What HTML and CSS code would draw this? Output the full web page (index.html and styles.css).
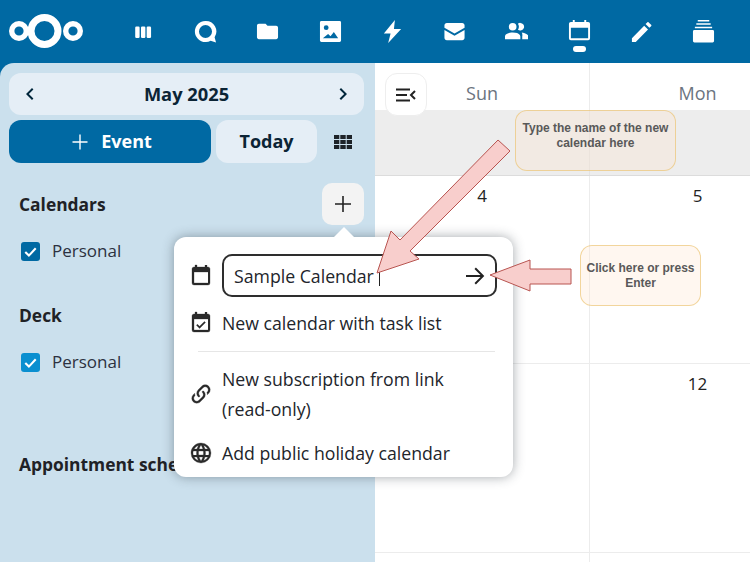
FILE: index.html
```html
<!DOCTYPE html>
<html lang="en">
<head>
<meta charset="utf-8">
<title>Calendar</title>
<link rel="stylesheet" href="styles.css">
</head>
<body>
<header class="topbar">
  <svg class="logo" viewBox="0 0 76 36"><g fill="none" stroke="#fff"><circle cx="11" cy="18" r="7.3" stroke-width="5.4"/><circle cx="36.500" cy="18" r="13.500" stroke-width="7"/><circle cx="65" cy="18" r="7.3" stroke-width="5.4"/></g></svg>
  <nav class="apps">
    <span class="app"><svg viewBox="0 0 24 24"><rect x="3.500" y="6" width="4.800" height="12.500" rx="1.300"/><rect x="9.800" y="6" width="4.800" height="12.500" rx="1.300"/><rect x="16" y="6" width="4.800" height="12.500" rx="1.300"/></svg></span>
    <span class="app"><svg viewBox="0 0 24 24"><path fill-rule="evenodd" d="M12 1a11 11 0 1 0 5.300 20.600L23 23.500 21.500 18A11 11 0 0 0 12 1Zm0 4.200a6.800 6.800 0 1 1 0 13.600 6.800 6.800 0 0 1 0-13.600Z"/></svg></span>
    <span class="app"><svg viewBox="0 0 24 24"><path d="M10 4H3C1.900 4 1 4.900 1 6V18C1 19.100 1.900 20 3 20H21C22.100 20 23 19.100 23 18V8C23 6.900 22.100 6 21 6H12L10 4Z"/></svg></span>
    <span class="app"><svg viewBox="0 0 24 24"><path fill-rule="evenodd" d="M2.500 1h19A1.500 1.500 0 0 1 23 2.500v19a1.500 1.500 0 0 1-1.500 1.500h-19A1.500 1.500 0 0 1 1 21.500v-19A1.500 1.500 0 0 1 2.500 1ZM7.500 5.500a2.500 2.500 0 1 0 0 5 2.500 2.500 0 0 0 0-5ZM4 19h16l-4.500-6.500-3.500 4.500-2.500-2.500L4 19Z"/></svg></span>
    <span class="app"><svg viewBox="0 0 24 24"><path d="M14.500 0 3 14h7L7.500 24 21 9.500h-7.500L14.500 0Z"/></svg></span>
    <span class="app"><svg viewBox="0 0 24 24"><path d="M22 8 12 14 2 8V5.500C2 4.100 3 3 4.400 3H19.600C21 3 22 4.100 22 5.500ZM22 10.500V18.500C22 19.900 21 21 19.600 21H4.400C3 21 2 19.900 2 18.500V10.500L12 16.500Z" transform="matrix(1.050 0 0 1 -.6 0)"/></svg></span>
    <span class="app"><svg viewBox="0 0 24 24"><path d="M16 17V20H0V17S0 13 8 13 16 17 16 17M12 7A4 4 0 1 0 8 11A4 4 0 0 0 12 7ZM17.500 13A6 6 0 0 1 18 17V20H25V18S24.500 14 17.500 13ZM16 3A4 4 0 0 0 13.500 3.800A6 6 0 0 1 13.500 10.200A4 4 0 1 0 16 3Z"/></svg></span>
    <span class="app app-active"><svg viewBox="0 0 24 24"><path d="M21 19H3V8H21M17 0V2H7V0H5V2H3C1.800 2 1 2.900 1 4V19A2 2 0 0 0 3 21H21A2 2 0 0 0 23 19V4C23 2.900 22.200 2 21 2H19V0"/></svg></span>
    <span class="app"><svg viewBox="0 0 24 24"><path d="M22 6.500C22.500 6 22.500 5.400 22 5L19.500 2.500C19 2 18.400 2 18 2.500L16.200 4.200 20.200 8.200M2 19V23H6L18.800 10 14.800 6 2 19Z"/></svg></span>
    <span class="app"><svg viewBox="0 0 24 24"><path d="M6 0h12v1.500H6ZM4.500 3.500h15V5h-15ZM3 7h18v1.500H3ZM2.500 10.500h19A1.500 1.500 0 0 1 23 12v10a1.500 1.500 0 0 1-1.500 1.500h-19A1.500 1.500 0 0 1 1 22V12a1.500 1.500 0 0 1 1.500-1.500Z"/></svg></span>
  </nav>
</header>

<main class="workspace">
  <aside class="sidebar">
    <div class="month-picker">
      <svg class="ico-dark" viewBox="0 0 24 24"><path d="M15.410 16.580 10.830 12l4.580-4.590L14 6l-6 6 6 6 1.410-1.420Z"/></svg>
      <span class="month-label">May 2025</span>
      <svg class="ico-dark" viewBox="0 0 24 24"><path d="M8.590 16.580 13.170 12 8.590 7.410 10 6l6 6-6 6-1.410-1.420Z"/></svg>
    </div>
    <div class="actions">
      <button class="btn btn-event"><svg viewBox="0 0 24 24"><path d="M19.500 12.700h-6.800v6.800h-1.400v-6.800H4.500v-1.400h6.800V4.500h1.400v6.800h6.800Z"/></svg>Event</button>
      <button class="btn btn-today">Today</button>
      <span class="view-switch"><svg viewBox="0 0 18 14"><path d="M0 0h5.300v4H0ZM6.300 0h5.400v4H6.300ZM12.700 0H18v4h-5.300ZM0 5h5.300v4H0ZM6.300 5h5.400v4H6.300ZM12.700 5H18v4h-5.300ZM0 10h5.300v4H0ZM6.300 10h5.400v4H6.300ZM12.700 10H18v4h-5.300Z"/></svg></span>
    </div>
    <section class="group group-calendars">
      <div class="group-head">
        <h2 class="group-title">Calendars</h2>
        <span class="add-btn"><svg viewBox="0 0 24 24"><path d="M20 12.800h-7.200V20h-1.600v-7.200H4v-1.600h7.200V4h1.600v7.200H20Z"/></svg></span>
      </div>
      <label class="cal-row"><span class="check check-dark"><svg viewBox="0 0 20 20"><path d="M4.500 10.500 8.300 14.300 15.500 6.500" /></svg></span>Personal</label>
    </section>
    <section class="group group-deck">
      <h2 class="group-title">Deck</h2>
      <label class="cal-row"><span class="check check-light"><svg viewBox="0 0 20 20"><path d="M4.500 10.500 8.300 14.300 15.500 6.500" /></svg></span>Personal</label>
    </section>
    <section class="group group-appt">
      <h2 class="group-title">Appointment schedules</h2>
    </section>
  </aside>

  <section class="calendar">
    <div class="cal-head">
      <div class="cal-col-head"><span class="toggle"><svg viewBox="0 0 24 24"><path class="toggle-lines" d="M2 5.500h14v2H2ZM2 11h11v2H2ZM2 16.500h14v2H2Z"/><path class="toggle-chevron" d="M21 8l-4 4 4 4"/></svg></span>Sun</div>
      <div class="cal-col-head">Mon</div>
    </div>
    <div class="allday"><div class="cell"></div><div class="cell"></div></div>
    <div class="week"><div class="cell day">4</div><div class="cell day">5</div></div>
    <div class="week"><div class="cell day"></div><div class="cell day">12</div></div>
    <div class="week"><div class="cell"></div><div class="cell"></div></div>
  </section>
</main>

<div class="popover">
  <div class="pop-row pop-row-input">
    <svg class="pop-ico" viewBox="0 0 24 24"><path d="M19 19H5V8H19M16 1V3H8V1H6V3H5C3.890 3 3 3.890 3 5V19A2 2 0 0 0 5 21H19A2 2 0 0 0 21 19V5C21 3.890 20.100 3 19 3H18V1"/></svg>
    <div class="name-input"><span class="name-value">Sample Calendar</span><span class="caret"></span><svg class="go" viewBox="0 0 24 24"><path d="M3 11v2h14.500l-6 6 1.400 1.400L21.300 12l-8.400-8.400L11.500 5l6 6Z"/></svg></div>
  </div>
  <div class="pop-row">
    <svg class="pop-ico" viewBox="0 0 24 24"><path d="M19 19H5V8H19M16 1V3H8V1H6V3H5C3.890 3 3 3.890 3 5V19A2 2 0 0 0 5 21H19A2 2 0 0 0 21 19V5C21 3.890 20.100 3 19 3H18V1M10.560 17.460 16.500 11.530 15.430 10.470 10.560 15.340 8.450 13.230 7.390 14.290Z"/></svg>
    <span>New calendar with task list</span>
  </div>
  <div class="pop-sep"></div>
  <div class="pop-row pop-row-tall">
    <svg class="pop-ico" viewBox="0 0 24 24"><path d="M10.590 13.410C11 13.800 11 14.440 10.590 14.830 10.200 15.220 9.560 15.220 9.170 14.830 7.220 12.880 7.220 9.710 9.170 7.760L12.710 4.220C14.660 2.270 17.830 2.270 19.780 4.220 21.730 6.170 21.730 9.340 19.780 11.290L18.290 12.780C18.300 11.960 18.170 11.140 17.890 10.360L18.360 9.880C19.540 8.710 19.540 6.810 18.360 5.640 17.190 4.460 15.290 4.460 14.120 5.640L10.590 9.170C9.410 10.340 9.410 12.240 10.590 13.410M13.410 9.170C13.800 8.780 14.440 8.780 14.830 9.170 16.780 11.120 16.780 14.290 14.830 16.240L11.290 19.780C9.340 21.730 6.170 21.730 4.220 19.780 2.270 17.830 2.270 14.660 4.220 12.710L5.710 11.220C5.700 12.040 5.830 12.860 6.110 13.650L5.640 14.120C4.460 15.290 4.460 17.190 5.640 18.360 6.810 19.540 8.710 19.540 9.880 18.360L13.410 14.830C14.590 13.660 14.590 11.760 13.410 10.590 13 10.200 13 9.560 13.410 9.170Z"/></svg>
    <span>New subscription from link<br>(read-only)</span>
  </div>
  <div class="pop-row">
    <svg class="pop-ico" viewBox="0 0 24 24"><path d="M16.360 14C16.440 13.340 16.500 12.680 16.500 12 16.500 11.320 16.440 10.660 16.360 10H19.740C19.900 10.640 20 11.310 20 12 20 12.690 19.900 13.360 19.740 14M14.590 19.560C15.190 18.450 15.650 17.250 15.970 16H18.920C17.960 17.650 16.430 18.930 14.590 19.560M14.340 14H9.660C9.560 13.340 9.500 12.680 9.500 12 9.500 11.320 9.560 10.650 9.660 10H14.340C14.430 10.650 14.500 11.320 14.500 12 14.500 12.680 14.430 13.340 14.340 14M12 19.960C11.170 18.760 10.500 17.430 10.090 16H13.910C13.500 17.430 12.830 18.760 12 19.960M8 8H5.080C6.030 6.340 7.570 5.060 9.400 4.440 8.800 5.550 8.350 6.750 8 8M5.080 16H8C8.350 17.250 8.800 18.450 9.400 19.560 7.570 18.930 6.030 17.650 5.080 16M4.260 14C4.100 13.360 4 12.690 4 12 4 11.310 4.100 10.640 4.260 10H7.640C7.560 10.660 7.500 11.320 7.500 12 7.500 12.680 7.560 13.340 7.640 14M12 4.030C12.830 5.230 13.500 6.570 13.910 8H10.090C10.500 6.570 11.170 5.230 12 4.030M18.920 8H15.970C15.650 6.750 15.190 5.550 14.590 4.440 16.430 5.070 17.960 6.340 18.920 8M12 2C6.470 2 2 6.500 2 12A10 10 0 0 0 12 22 10 10 0 0 0 22 12 10 10 0 0 0 12 2Z"/></svg>
    <span>Add public holiday calendar</span>
  </div>
</div>

<svg class="arrows" viewBox="0 0 750 562">
  <path class="arrow" d="M498 140 510 151 410 251 419 259 377 273 391 231 400 240Z"/>
  <path class="arrow" d="M571 269V284H530V291L490 275 530 260V269Z"/>
</svg>
<div class="note note-name">Type the name of the new calendar here</div>
<div class="note note-enter">Click here or press Enter</div>
</body>
</html>
```
FILE: styles.css
```css
* { box-sizing: border-box; }
html, body { margin: 0; height: 100%; }
body {
  width: 750px;
  height: 562px;
  overflow: hidden;
  position: relative;
  background: #0069a3;
  font-family: "Open Sans", "Noto Sans", sans-serif;
  color: #222;
  display: flex;
  flex-direction: column;
}

/* top bar */
.topbar { height: 63px; flex: none; display: flex; align-items: center; background: #0069a3; padding-left: 8px; }
.logo { width: 76px; height: 36px; display: block; margin-top: -1px; }
.apps { display: flex; margin-left: 28px; }
.app { width: 62.300px; height: 44px; display: flex; align-items: center; justify-content: center; position: relative; }
.app svg { width: 23px; height: 23px; fill: #fff; display: block; }
.apps .app:first-child svg { width: 22px; height: 22px; }
.app-active svg { margin-top: -1px; }
.app-active::after {
  content: "";
  position: absolute;
  left: 50%;
  bottom: 2px;
  width: 13px;
  height: 6px;
  margin-left: -6.500px;
  border-radius: 3px;
  background: #fff;
}

.workspace { flex: 1; display: flex; min-height: 0; }

/* sidebar */
.sidebar {
  width: 375px;
  flex: none;
  background: #cbe0ed;
  border-top-left-radius: 14px;
  padding: 10px 11px 0 9px;
}
.month-picker {
  height: 42px;
  background: #e5eef6;
  border-radius: 12px;
  display: flex;
  align-items: center;
  justify-content: space-between;
  padding: 0 9px;
}
.ico-dark { width: 24px; height: 24px; fill: #00263b; display: block; }
.month-label { font-size: 18.300px; font-weight: 700; color: #0b2435; padding-bottom: 2px; }
.actions { display: flex; align-items: center; gap: 5px; margin-top: 5px; }
.btn { border: 0; height: 43px; border-radius: 12px; font: inherit; font-size: 18px; font-weight: 700; display: flex; align-items: center; justify-content: center; padding: 0 0 2px; flex: none; }
.btn-event { width: 202px; background: #0069a3; color: #fff; gap: 9px; }
.btn-event svg { width: 24px; height: 24px; fill: #fff; margin-top: 2px; }
.btn-today { width: 101px; background: #e5eef6; color: #0b2435; }
.view-switch { width: 42px; flex: none; display: flex; justify-content: center; }
.view-switch svg { width: 18px; height: 14px; fill: #1d2328; display: block; }

.group { padding-left: 10px; }
.group-head { display: flex; justify-content: space-between; align-items: center; height: 42px; }
.group-calendars { margin-top: 20px; }
.group-deck { margin-top: 40px; }
.group-appt { margin-top: 78px; }
.group-title { margin: 0; font-size: 17.400px; font-weight: 700; line-height: 24px; color: #1f2226; white-space: nowrap; }
.add-btn { width: 42px; height: 42px; border-radius: 10px; background: #f3f3f3; display: flex; align-items: center; justify-content: center; }
.add-btn svg { width: 24px; height: 24px; fill: #222; }
.cal-row { display: flex; align-items: center; gap: 12px; font-size: 17px; line-height: 24px; color: #2c3140; padding-left: 2px; }
.group-calendars .cal-row { margin-top: 14px; }
.group-deck .cal-row { margin-top: 23px; }
.check { width: 19px; height: 19px; border-radius: 3px; display: block; }
.check svg { width: 19px; height: 19px; fill: none; stroke: #fff; stroke-width: 2.200; display: block; }
.check-dark { background: #0069a3; }
.check-light { background: #0a8fd0; }

/* calendar */
.calendar { flex: 1; background: #fff; overflow: hidden; min-width: 0; }
.cal-head, .allday, .week { display: grid; grid-template-columns: 214px 216px; }
.cal-head { height: 47px; }
.cal-col-head { position: relative; display: flex; align-items: center; justify-content: center; font-size: 18px; color: #6b7480; padding-top: 12px; border-left: 1px solid #ececec; }
.cal-col-head:first-child { border-left: 0; }
.toggle {
  position: absolute;
  left: 10px;
  top: 10px;
  width: 42px;
  height: 43px;
  border: 1px solid #eee;
  border-radius: 12px;
  background: #fff;
  display: flex;
  align-items: center;
  justify-content: center;
  z-index: 1;
}
.toggle svg { width: 24px; height: 24px; display: block; }
.toggle-lines { fill: #222; }
.toggle-chevron { fill: none; stroke: #222; stroke-width: 2; }
.allday { height: 66px; background: #ededed; border-bottom: 1px solid #dcdcdc; }
.cell { border-left: 1px solid #e3e3e3; }
.allday .cell:first-child, .week .cell:first-child { border-left: 0; }
.week { height: 188px; border-bottom: 1px solid #ececec; }
.week + .week { height: 189px; }
.week .cell { border-left-color: #ececec; }
.day { font-size: 17px; line-height: 24px; text-align: center; padding-top: 8px; color: #222; }

/* popover */
.popover {
  position: absolute;
  left: 174px;
  top: 237px;
  width: 339px;
  height: 240px;
  background: #fff;
  border-radius: 12px;
  box-shadow: 0 0 12px rgba(40, 50, 60, .42);
  padding-top: 17px;
  font-size: 17.700px;
  color: #22252b;
}
.popover::before {
  content: "";
  position: absolute;
  left: 160px;
  top: -10px;
  border-left: 10px solid transparent;
  border-right: 10px solid transparent;
  border-bottom: 10px solid #fff;
}
.pop-row { display: flex; align-items: center; min-height: 44px; padding-right: 16px; line-height: 30px; }
.pop-row-input { min-height: 43px; margin-bottom: 4px; }
.pop-row-tall { min-height: 68px; margin-bottom: 3px; }
.pop-ico { width: 24px; height: 24px; flex: none; fill: #2a2a2a; stroke: #2a2a2a; stroke-width: .3; margin: 0 9px 0 15px; display: block; }
.pop-sep { height: 1px; background: #e6e6e6; margin: 6px 18px 8px 24px; }
.name-input { flex: 1; height: 43px; border: 2px solid #2e2e2e; border-radius: 10px; display: flex; align-items: center; padding: 0 8px 0 10px; }
.caret { width: 1px; height: 20px; background: #222; margin-left: 5px; }
.go { width: 24px; height: 24px; fill: #222; margin-left: auto; display: block; }

/* annotations */
.arrows { position: absolute; left: 0; top: 0; width: 750px; height: 562px; pointer-events: none; }
.arrow { fill: #f8cecc; stroke: #b85450; stroke-width: 1; }
.note {
  position: absolute;
  border: 1px solid #f0c36d;
  border-radius: 12px;
  font-family: "Liberation Sans", Arial, sans-serif;
  font-size: 12px;
  font-weight: 700;
  line-height: 15px;
  color: #595959;
  text-align: center;
  display: flex;
  align-items: center;
  justify-content: center;
}
.note-name { left: 515px; top: 110px; width: 161px; height: 61px; padding: 0 3px 9px; background: rgba(255, 230, 204, .3); border-color: rgba(234, 190, 100, .6); }
.note-enter { left: 580px; top: 245px; width: 121px; height: 61px; padding: 0 4px; background: rgba(255, 230, 204, .3); border-color: rgba(234, 190, 100, .6); }
```
